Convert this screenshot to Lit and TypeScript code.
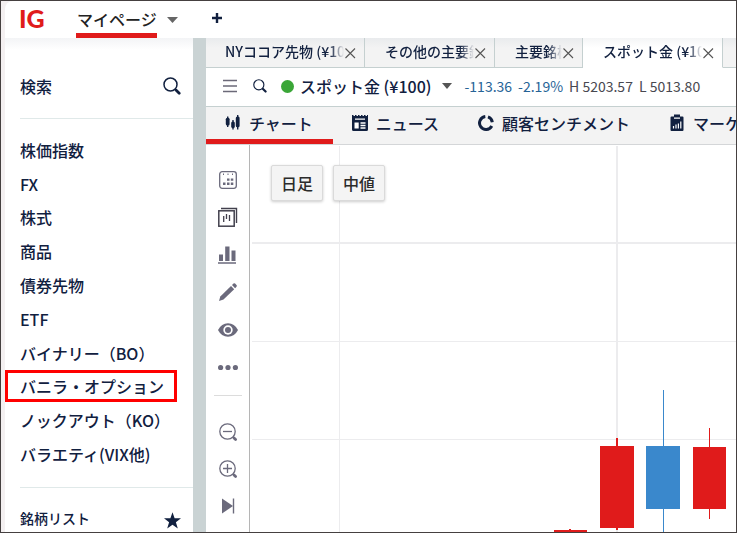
import { LitElement, html, svg, css } from "lit";
import { customElement, state } from "lit/decorators.js";
import { classMap } from "lit/directives/class-map.js";

const MARKETS = [
  "株価指数", "FX", "株式", "商品", "債券先物", "ETF",
  "バイナリー（BO）", "バニラ・オプション", "ノックアウト（KO）", "バラエティ(VIX他)",
];

const TABS = [
  { label: "NYココア先物 (¥100)", size: "wide" },
  { label: "その他の主要銘柄", size: "medium" },
  { label: "主要銘柄", size: "narrow" },
  { label: "スポット金 (¥100)", size: "current" },
];

const magnifier = svg`<circle cx="7.5" cy="7.5" r="6.5" fill="none" stroke="currentColor" stroke-width="1.5"/>
  <path d="M12 12l1.500 1.500" stroke="currentColor" stroke-width="1.500"/>
  <path d="M13.200 13.200l3 3" stroke="currentColor" stroke-width="2.800" stroke-linecap="round"/>`;

const lens = svg`<circle cx="9.5" cy="9.500" r="7.700" fill="none" stroke="currentColor" stroke-width="1.300"/>
  <path d="M15 15l1.500 1.500" stroke="currentColor" stroke-width="1.500"/>
  <path d="M16 16l1.600 1.600" stroke="currentColor" stroke-width="2.800" stroke-linecap="round"/>`;

const TOOLS = [
  {
    name: "期間",
    art: svg`<rect x="1.700" y="1.700" width="16.600" height="16.600" rx="2.500" fill="none" stroke="currentColor" stroke-width="1.300"/>
      <path d="M5.500 3.500v1.500M10 3.500v1.500M14.500 3.500v1.500" stroke="currentColor" stroke-width="1"/>
      <path d="M9 8.500h2.500v2.200H9zM12.800 8.500h2.500v2.200h-2.500zM5 12.500h2.500v2.400H5zM9 12.500h2.500v2.400H9zM12.800 12.500h2.500v2.400h-2.500z" fill="currentColor"/>`,
  },
  {
    name: "チャート分割",
    dark: true,
    art: svg`<path d="M3 1.500h15.500V16" fill="none" stroke="currentColor" stroke-width="1.400"/>
      <rect x=".8" y="3.800" width="15.400" height="15.400" fill="none" stroke="currentColor" stroke-width="1.500"/>
      <path d="M5.700 9v6M8.500 7v5M11.500 8v6" stroke="currentColor" stroke-width="1.300"/>`,
  },
  {
    name: "指標",
    art: svg`<path d="M1 9.500h4V16H1zM7.200 1.500h4.300V16H7.200zM13.500 5.500h4V16h-4zM0 17.200h18v1.500H0z" fill="currentColor"/>`,
  },
  {
    name: "描画",
    art: svg`<path d="M1 19l1.300-4.600L13 4l3.200 3.200L5.500 17.600z" fill="currentColor"/>
      <path d="M14 3l1.500-1.400q.8-.7 1.600 0l1.400 1.500q.8.800 0 1.600l-1.400 1.500z" fill="currentColor"/>`,
  },
  {
    name: "表示",
    art: svg`<path d="M0 10q3.500-6.800 10-6.800T20 10q-3.500 6.800-10 6.800T0 10z" fill="currentColor"/>
      <circle cx="10" cy="10" r="4.700" fill="#fff"/><circle cx="10" cy="10" r="3" fill="currentColor"/>`,
  },
  {
    name: "その他",
    art: svg`<g fill="currentColor"><circle cx="2.600" cy="10.500" r="2.600"/><circle cx="10" cy="10.500" r="2.600"/><circle cx="17.400" cy="10.500" r="2.600"/></g>`,
  },
];

const ZOOMS = [
  { name: "縮小", art: svg`${lens}<path d="M5 9.500h9" stroke="currentColor" stroke-width="1.300"/>` },
  { name: "拡大", art: svg`${lens}<path d="M5 9.500h9M9.500 5v9" stroke="currentColor" stroke-width="1.300"/>` },
  { name: "最新へ", art: svg`<path d="M4 2.500l11 7.500L4 17.500z" fill="currentColor"/><path d="M15.500 2.500v15" stroke="currentColor" stroke-width="1.400"/>` },
];

const VIEWS = [
  {
    label: "チャート",
    art: svg`<path d="M3.700 2.500v10.500M9 6v9.500M13.700 1v14.500" stroke="currentColor" stroke-width="1.400"/>
      <rect x="1.800" y="3.800" width="3.800" height="7.700" rx="1.500" fill="currentColor"/><rect x="7.200" y="7.500" width="3.600" height="6.500" rx="1.500" fill="currentColor"/><rect x="11.800" y="2.500" width="3.800" height="10.800" rx="1.500" fill="currentColor"/>`,
  },
  {
    label: "ニュース",
    art: svg`<path d="M1 1h1.500v1H4V1h1.500v1H7V1h1.500v1H10V1h1.500v1H13V1h1.500v1H16V1h1v14.500q0 1.500-1.500 1.500h-13Q1 17 1 15.500z" fill="currentColor"/>
      <path d="M4 5.200h10M9.500 9h5M9.500 11.500h5M9.500 14h5" stroke="#fff" stroke-width="1.300"/><rect x="3.500" y="8.500" width="4.200" height="6" fill="#fff"/>`,
  },
  {
    label: "顧客センチメント",
    art: svg`<path d="M8.300 2.500A6.500 6.500 0 1 0 14.800 12" fill="none" stroke="currentColor" stroke-width="3"/>
      <path d="M11 2.900A6.500 6.500 0 0 1 15.300 8.200" fill="none" stroke="currentColor" stroke-width="3"/>`,
  },
  {
    label: "マーケット",
    art: svg`<path d="M3.500 2.500h2.500V.5h6v2h2.500q1 0 1 1v12.500q0 1-1 1h-11q-1 0-1-1V3.500q0-1 1-1z" fill="currentColor"/>
      <path d="M6 4.200h6M5.500 14.500v-2.500M8 14.500v-4M10.400 14.500v-5M12.800 14.500v-7" stroke="#fff" stroke-width="1.200"/>`,
  },
];

const CANDLES = [
  { tone: "down", x: 304, y: 385, w: 33, h: 40, wx: 319, wy: 384, ww: 2, wh: 10 },
  { tone: "down", x: 350, y: 301, w: 34, h: 82, wx: 366, wy: 293, ww: 2, wh: 92 },
  { tone: "up", x: 396, y: 301, w: 34, h: 63, wx: 413, wy: 245, ww: 1, wh: 150 },
  { tone: "down", x: 443, y: 302, w: 33, h: 62, wx: 459, wy: 283, ww: 1, wh: 91 },
];

const reset = css`
  * { box-sizing: border-box; }
  button { font: inherit; color: inherit; background: none; border: 0; padding: 0; margin: 0; cursor: pointer; text-align: left; }
  a { color: inherit; text-decoration: none; }
  svg { display: block; flex: none; }
`;

@customElement("market-sidebar")
class MarketSidebar extends LitElement {
  @state() private selected = "バニラ・オプション";

  static styles = [reset, css`
    :host { display: block; background: linear-gradient(#f3f4f6, #fff 12px); color: #11203f; font-weight: 500; }
    .search { display: flex; align-items: center; height: 81px; margin-left: 15px; padding: 16px 12px 0 0; border-bottom: 1px solid #e0e9e9; }
    .field { flex: 1; min-width: 0; border: 0; padding: 0; outline: 0; background: none; font: inherit; color: inherit; }
    .field::placeholder { color: inherit; opacity: 1; }
    .list { list-style: none; margin: 0 0 0 15px; padding: 14px 0 16px; display: grid; grid-auto-rows: 1fr; height: 369px; border-bottom: 1px solid #e0e9e9; }
    .item { display: flex; align-items: center; position: relative; }
    .item.on::after { content: ""; position: absolute; inset: 0 16px 1px -15px; border: 3px solid #f00; pointer-events: none; }
    .watch { display: flex; align-items: flex-end; justify-content: space-between; padding: 18px 12px 0 15px; line-height: 24px; font-size: 14px; }
  `];

  render() {
    return html`
      <div class="search">
        <input class="field" type="text" placeholder="検索" aria-label="検索" />
        <button aria-label="検索する"><svg width="18" height="18" viewBox="0 0 18 18">${magnifier}</svg></button>
      </div>
      <ul class="list">
        ${MARKETS.map((m) => html`<li class=${classMap({ item: true, on: m === this.selected })}>
          <button @click=${() => (this.selected = m)}>${m}</button></li>`)}
      </ul>
      <div class="watch">
        <span>銘柄リスト</span>
        <svg width="18" height="18" viewBox="0 0 18 18"><path d="M9.500 .3l2.100 5.900 6.400.1-5.100 3.900 1.900 6.200L9.500 12.800l-5.300 3.600 1.900-6.200L1 6.300l6.400-.1z" fill="currentColor"/></svg>
      </div>`;
  }
}

@customElement("price-chart")
class PriceChart extends LitElement {
  static styles = [reset, css`
    :host { display: flex; min-height: 0; background: #fff; }
    .tools { flex: none; width: 44px; padding-top: 16px; border-right: 1px solid #b5b5b5; color: #6b6a7c; }
    .group { display: grid; grid-auto-rows: 1fr; justify-items: center; align-items: center; height: 225px; }
    .group.zoom { height: 112px; }
    .dark { color: #42404d; }
    .rule { height: 1px; margin: 9px 7px 17px 8px; background: #dcdcdc; }
    .plot { flex: 1; min-width: 0; position: relative; overflow: hidden; }
    .canvas { position: absolute; inset: 0; width: 100%; height: 100%; }
    .grid { fill: #ececee; }
    .down { fill: #e01b1b; }
    .up { fill: #3a88cc; }
    .options { position: absolute; top: 20px; left: 21px; display: flex; gap: 10px; }
    .option { padding: 0 9px; height: 36px; border: 1px solid #dadada; border-radius: 2px; background: #f4f4f4; color: #2b2b2b; box-shadow: 0 1px 3px #0003; }
  `];

  render() {
    const tool = (t: any) => html`<button class=${classMap({ dark: !!t.dark })} aria-label=${t.name}>
      <svg width="20" height="20" viewBox="0 0 20 20">${t.art}</svg></button>`;
    return html`
      <div class="tools">
        <div class="group">${TOOLS.map(tool)}</div>
        <div class="rule"></div>
        <div class="group zoom">${ZOOMS.map(tool)}</div>
      </div>
      <div class="plot">
        <svg class="canvas">
          <g class="grid">
            <rect x="2" y="97" width="100%" height="2"/><rect x="2" y="196" width="100%" height="1"/><rect x="2" y="294" width="100%" height="1"/>
            <rect x="89" y="1" width="1" height="100%"/><rect x="366" y="1" width="2" height="100%"/>
          </g>
          ${CANDLES.map((c) => svg`<g class=${c.tone}>
            <rect x=${c.wx} y=${c.wy} width=${c.ww} height=${c.wh}/><rect x=${c.x} y=${c.y} width=${c.w} height=${c.h}/></g>`)}
        </svg>
        <div class="options"><button class="option">日足</button><button class="option">中値</button></div>
      </div>`;
  }
}

@customElement("app-root")
class AppRoot extends LitElement {
  @state() private view = 0;

  static styles = [reset, css`
    :host { display: flex; flex-direction: column; min-height: 100vh; box-sizing: border-box; border: 1px solid #454040; padding-left: 4px; background: #f4f0f1;
      font: 500 16px/24px "Noto Sans CJK JP", sans-serif; color: #11203f; overflow: hidden; }
    .top { display: flex; height: 37px; background: #fff; border-top-left-radius: 8px; padding-left: 14px; flex: none; }
    .logo { width: 57px; font: 900 25px/34px Lato, sans-serif; color: #e01b1b; }
    .page { display: flex; align-items: center; color: #222; }
    .name { height: 37px; line-height: 36px; padding: 0 0 0 1px; border-bottom: 5px solid #e01b1b; }
    .caret { margin: 0 0 0 10px; }
    .add { margin: 11px 0 0 33px; height: 12px; }
    .body { flex: 1; display: flex; min-height: 0; }
    .side { flex: none; width: 188px; }
    .main { flex: 1; min-width: 0; display: flex; flex-direction: column; background: #fff; border-left: 13px solid #cad3d4; }
    .tabs { display: flex; flex: none; height: 30px; background: linear-gradient(#e9ebed, #f3f3f3 10px); }
    .tab { flex: none; display: flex; align-items: center; padding: 0 8px 0 20px; border-right: 1px solid #c5d0d0; border-bottom: 1px solid #c5d0d0; font-size: 14px; }
    .wide { width: 159px; padding-left: 19px; }
    .medium { width: 130px; }
    .narrow { width: 88px; }
    .current { width: 140px; background: linear-gradient(#f4f5f6, #fff 10px); border-bottom-color: #fff; }
    .label { flex: 1; min-width: 0; padding-bottom: 3px; overflow: hidden; white-space: nowrap; mask-image: linear-gradient(to left, transparent, #000 14px); }
    .rest { flex: 1; border-bottom: 1px solid #c5d0d0; }
    .close { color: #555; }
    .quote { display: flex; align-items: center; flex: none; height: 39px; padding: 0 0 2px 17px; border-bottom: 1px solid #c5d0d0; white-space: nowrap; overflow: hidden; }
    .find { margin-left: 16px; }
    .dot { flex: none; width: 13px; height: 13px; border-radius: 50%; background: #3aa637; margin: 0 6px 0 14px; }
    .pick { margin: 0 12px 0 11px; }
    .figures { display: flex; gap: 6px; font-size: 14px; font-weight: 400; color: #484850; }
    .fall { color: #266396; }
    .views { display: flex; flex: none; height: 38px; background: #f3f3f3; border-bottom: 1px solid #d4d6d8; overflow: hidden; }
    .view { flex: none; display: flex; align-items: center; gap: 7px; height: 37px; padding: 0 20px 0 18px; border-bottom: 5px solid transparent; white-space: nowrap; }
    .view.on { border-color: #e01b1b; }
    .chart { flex: 1; }
  `];

  render() {
    return html`
      <header class="top">
        <a class="logo" href="#">IG</a>
        <button class="page"><span class="name">マイページ</span>
          <svg class="caret" width="11" height="6" viewBox="0 0 11 6"><path d="M0 0h11L5.500 6z" fill="#666"/></svg></button>
        <button class="add" aria-label="追加"><svg width="12" height="12" viewBox="0 0 12 12"><path d="M6 1v10M1 6h10" stroke="#11203f" stroke-width="2.400"/></svg></button>
      </header>
      <div class="body">
        <market-sidebar class="side"></market-sidebar>
        <main class="main">
          <div class="tabs">
            ${TABS.map((t) => html`<div class="tab ${t.size}"><span class="label">${t.label}</span>
              <button class="close" aria-label="閉じる"><svg width="12" height="12" viewBox="0 0 12 12"><path d="M1.500 1.500l9.500 9.500M11 1.500L1.500 11" stroke="currentColor" stroke-width="1.100"/></svg></button></div>`)}
            <div class="rest"></div>
          </div>
          <div class="quote">
            <button aria-label="メニュー"><svg width="14" height="14" viewBox="0 0 14 14"><path d="M0 1.500h14M0 7h14M0 12.500h14" stroke="#6b6978" stroke-width="1.400"/></svg></button>
            <button class="find" aria-label="検索"><svg width="14" height="14" viewBox="0 0 18 18">${magnifier}</svg></button>
            <span class="dot"></span><span>スポット金 (¥100)</span>
            <svg class="pick" width="10" height="6" viewBox="0 0 10 6"><path d="M0 0h10L5 6z" fill="#555"/></svg>
            <span class="figures"><span class="fall">-113.36</span><span class="fall">-2.19%</span><span>H 5203.57</span><span>L 5013.80</span></span>
          </div>
          <nav class="views">
            ${VIEWS.map((v, i) => html`<button class=${classMap({ view: true, on: i === this.view })} @click=${() => (this.view = i)}>
              <svg width="18" height="18" viewBox="0 0 18 18">${v.art}</svg>${v.label}</button>`)}
          </nav>
          <price-chart class="chart"></price-chart>
        </main>
      </div>`;
  }
}
